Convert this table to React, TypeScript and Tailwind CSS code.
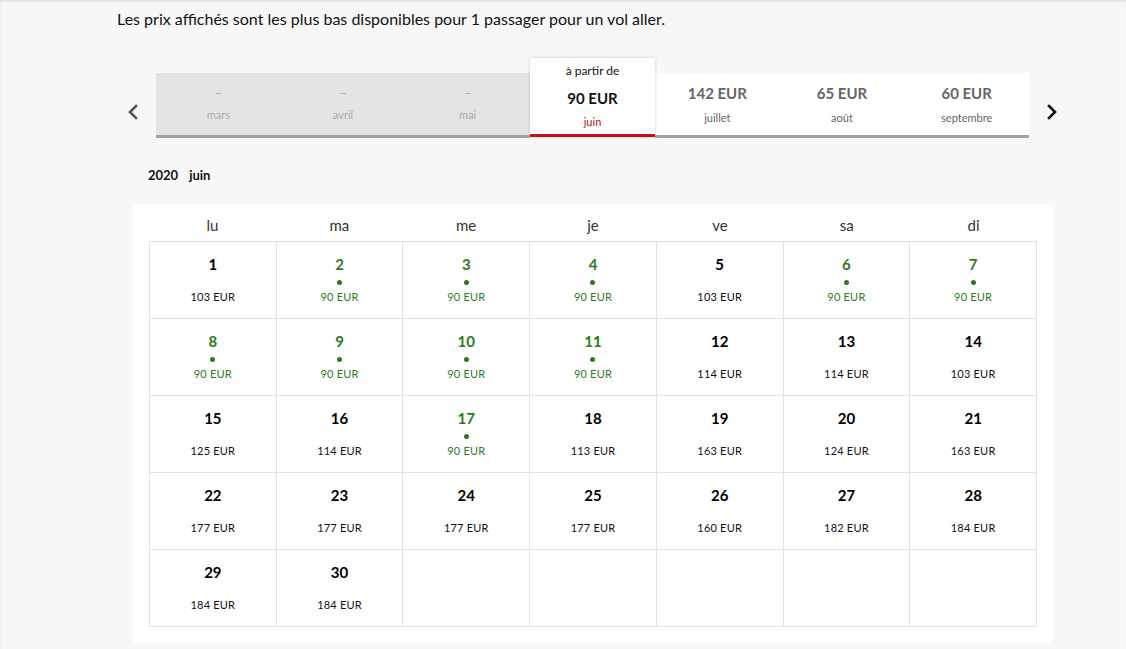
const months = [
  { price: "–", name: "mars", disabled: true },
  { price: "–", name: "avril", disabled: true },
  { price: "–", name: "mai", disabled: true },
  { price: "90 EUR", name: "juin", active: true },
  { price: "142 EUR", name: "juillet" },
  { price: "65 EUR", name: "août" },
  { price: "60 EUR", name: "septembre" },
];

const days = ["lu", "ma", "me", "je", "ve", "sa", "di"];

const prices: [number, number][] = [
  [1, 103], [2, 90], [3, 90], [4, 90], [5, 103], [6, 90], [7, 90],
  [8, 90], [9, 90], [10, 90], [11, 90], [12, 114], [13, 114], [14, 103],
  [15, 125], [16, 114], [17, 90], [18, 113], [19, 163], [20, 124], [21, 163],
  [22, 177], [23, 177], [24, 177], [25, 177], [26, 160], [27, 182], [28, 184],
  [29, 184], [30, 184],
];

const Chevron = ({ dir }: { dir: "left" | "right" }) => (
  <svg width="14" height="16" viewBox="0 0 14 16" fill="none">
    <path
      d={dir === "left" ? "M10 2 L4 8 L10 14" : "M4 2 L10 8 L4 14"}
      stroke={dir === "left" ? "#555" : "#111"}
      strokeWidth="2.6"
      strokeLinecap="square"
    />
  </svg>
);

const DayCell = ({ day, price }: { day?: number; price?: number }) => {
  if (!day) return <div className="h-[77px] border-r border-b border-[#e2e2e2] bg-white" />;
  const cheap = price === 90;
  return (
    <div className="h-[77px] border-r border-b border-[#e2e2e2] bg-white flex flex-col items-center pt-[12px]">
      <span className={`text-[15px] font-bold leading-5 ${cheap ? "text-[#2f7a1f]" : "text-black"}`}>{day}</span>
      <span className={`mt-[6px] w-[5px] h-[5px] rounded-full ${cheap ? "bg-[#2f7a1f]" : "bg-transparent"}`} />
      <span
        className={`mt-[4px] text-[11px] leading-4 tracking-[0.2px] ${cheap ? "text-[#2f7a1f]" : "text-[#111]"}`}
      >
        {price} EUR
      </span>
    </div>
  );
};

export default function App() {
  const cells: { day?: number; price?: number }[] = prices.map(([d, p]) => ({ day: d, price: p }));
  while (cells.length < 35) cells.push({});

  return (
    <div
      className="min-h-screen bg-[#f8f8f8] text-[#111] shadow-[inset_0_2px_2px_rgba(0,0,0,0.08)]"
      style={{ fontFamily: "Lato, 'Noto Sans', sans-serif" }}
    >
      <p className="pl-[117px] pt-[9px] text-[16px] leading-5 text-[#111]">
        Les prix affichés sont les plus bas disponibles pour 1 passager pour un vol aller.
      </p>

      <div className="mt-[29px] ml-[126px] flex items-start">
        <button className="w-[14px] flex justify-center mt-[46px]">
          <Chevron dir="left" />
        </button>
        <div className="ml-[16px] w-[873px] h-[80px] flex items-end">
          {months.map((m) =>
            m.active ? (
              <div
                key={m.name}
                className="w-[125px] h-[79px] bg-white border-b-[3px] border-[#c8101a] shadow-[0_0_3px_rgba(0,0,0,0.2)] flex flex-col items-center relative z-10 mb-[1px]"
              >
                <span className="mt-[5px] text-[12px] leading-4 text-[#111]">à partir de</span>
                <span className="mt-[9px] text-[15px] font-bold leading-5 text-[#111]">{m.price}</span>
                <span className="mt-[6px] text-[11px] leading-4 text-[#b3121b]">{m.name}</span>
              </div>
            ) : (
              <div
                key={m.name}
                className={`w-[124.7px] h-[65px] border-b-[3px] border-[#a3a3a3] flex flex-col items-center ${
                  m.disabled ? "bg-[#e4e4e4]" : "bg-white"
                }`}
              >
                {m.disabled ? (
                  <>
                    <span className="mt-[10px] text-[13px] leading-5 text-[#b0b0b0]">{m.price}</span>
                    <span className="mt-[4px] text-[11px] leading-4 text-[#aaa]">{m.name}</span>
                  </>
                ) : (
                  <>
                    <span className="mt-[10px] text-[15px] font-bold leading-5 text-[#666]">{m.price}</span>
                    <span className="mt-[7px] text-[11px] leading-4 text-[#666]">{m.name}</span>
                  </>
                )}
              </div>
            )
          )}
        </div>
        <button className="ml-[16px] w-[14px] flex justify-center mt-[46px]">
          <Chevron dir="right" />
        </button>
      </div>

      <div className="mt-[29px] ml-[148px] text-[13px] font-bold leading-4 flex gap-[11px]">
        <span>2020</span>
        <span>juin</span>
      </div>

      <div className="mt-[21px] ml-[133px] w-[920px] bg-white px-[16px] pb-[16px]">
        <div className="grid grid-cols-7 h-[37px] items-center">
          {days.map((d) => (
            <div key={d} className="text-center text-[15px] text-[#333] pt-[5px]">
              {d}
            </div>
          ))}
        </div>
        <div className="grid grid-cols-7 border-t border-l border-[#e2e2e2]">
          {cells.map((c, i) => (
            <DayCell key={i} day={c.day} price={c.price} />
          ))}
        </div>
      </div>
    </div>
  );
}
